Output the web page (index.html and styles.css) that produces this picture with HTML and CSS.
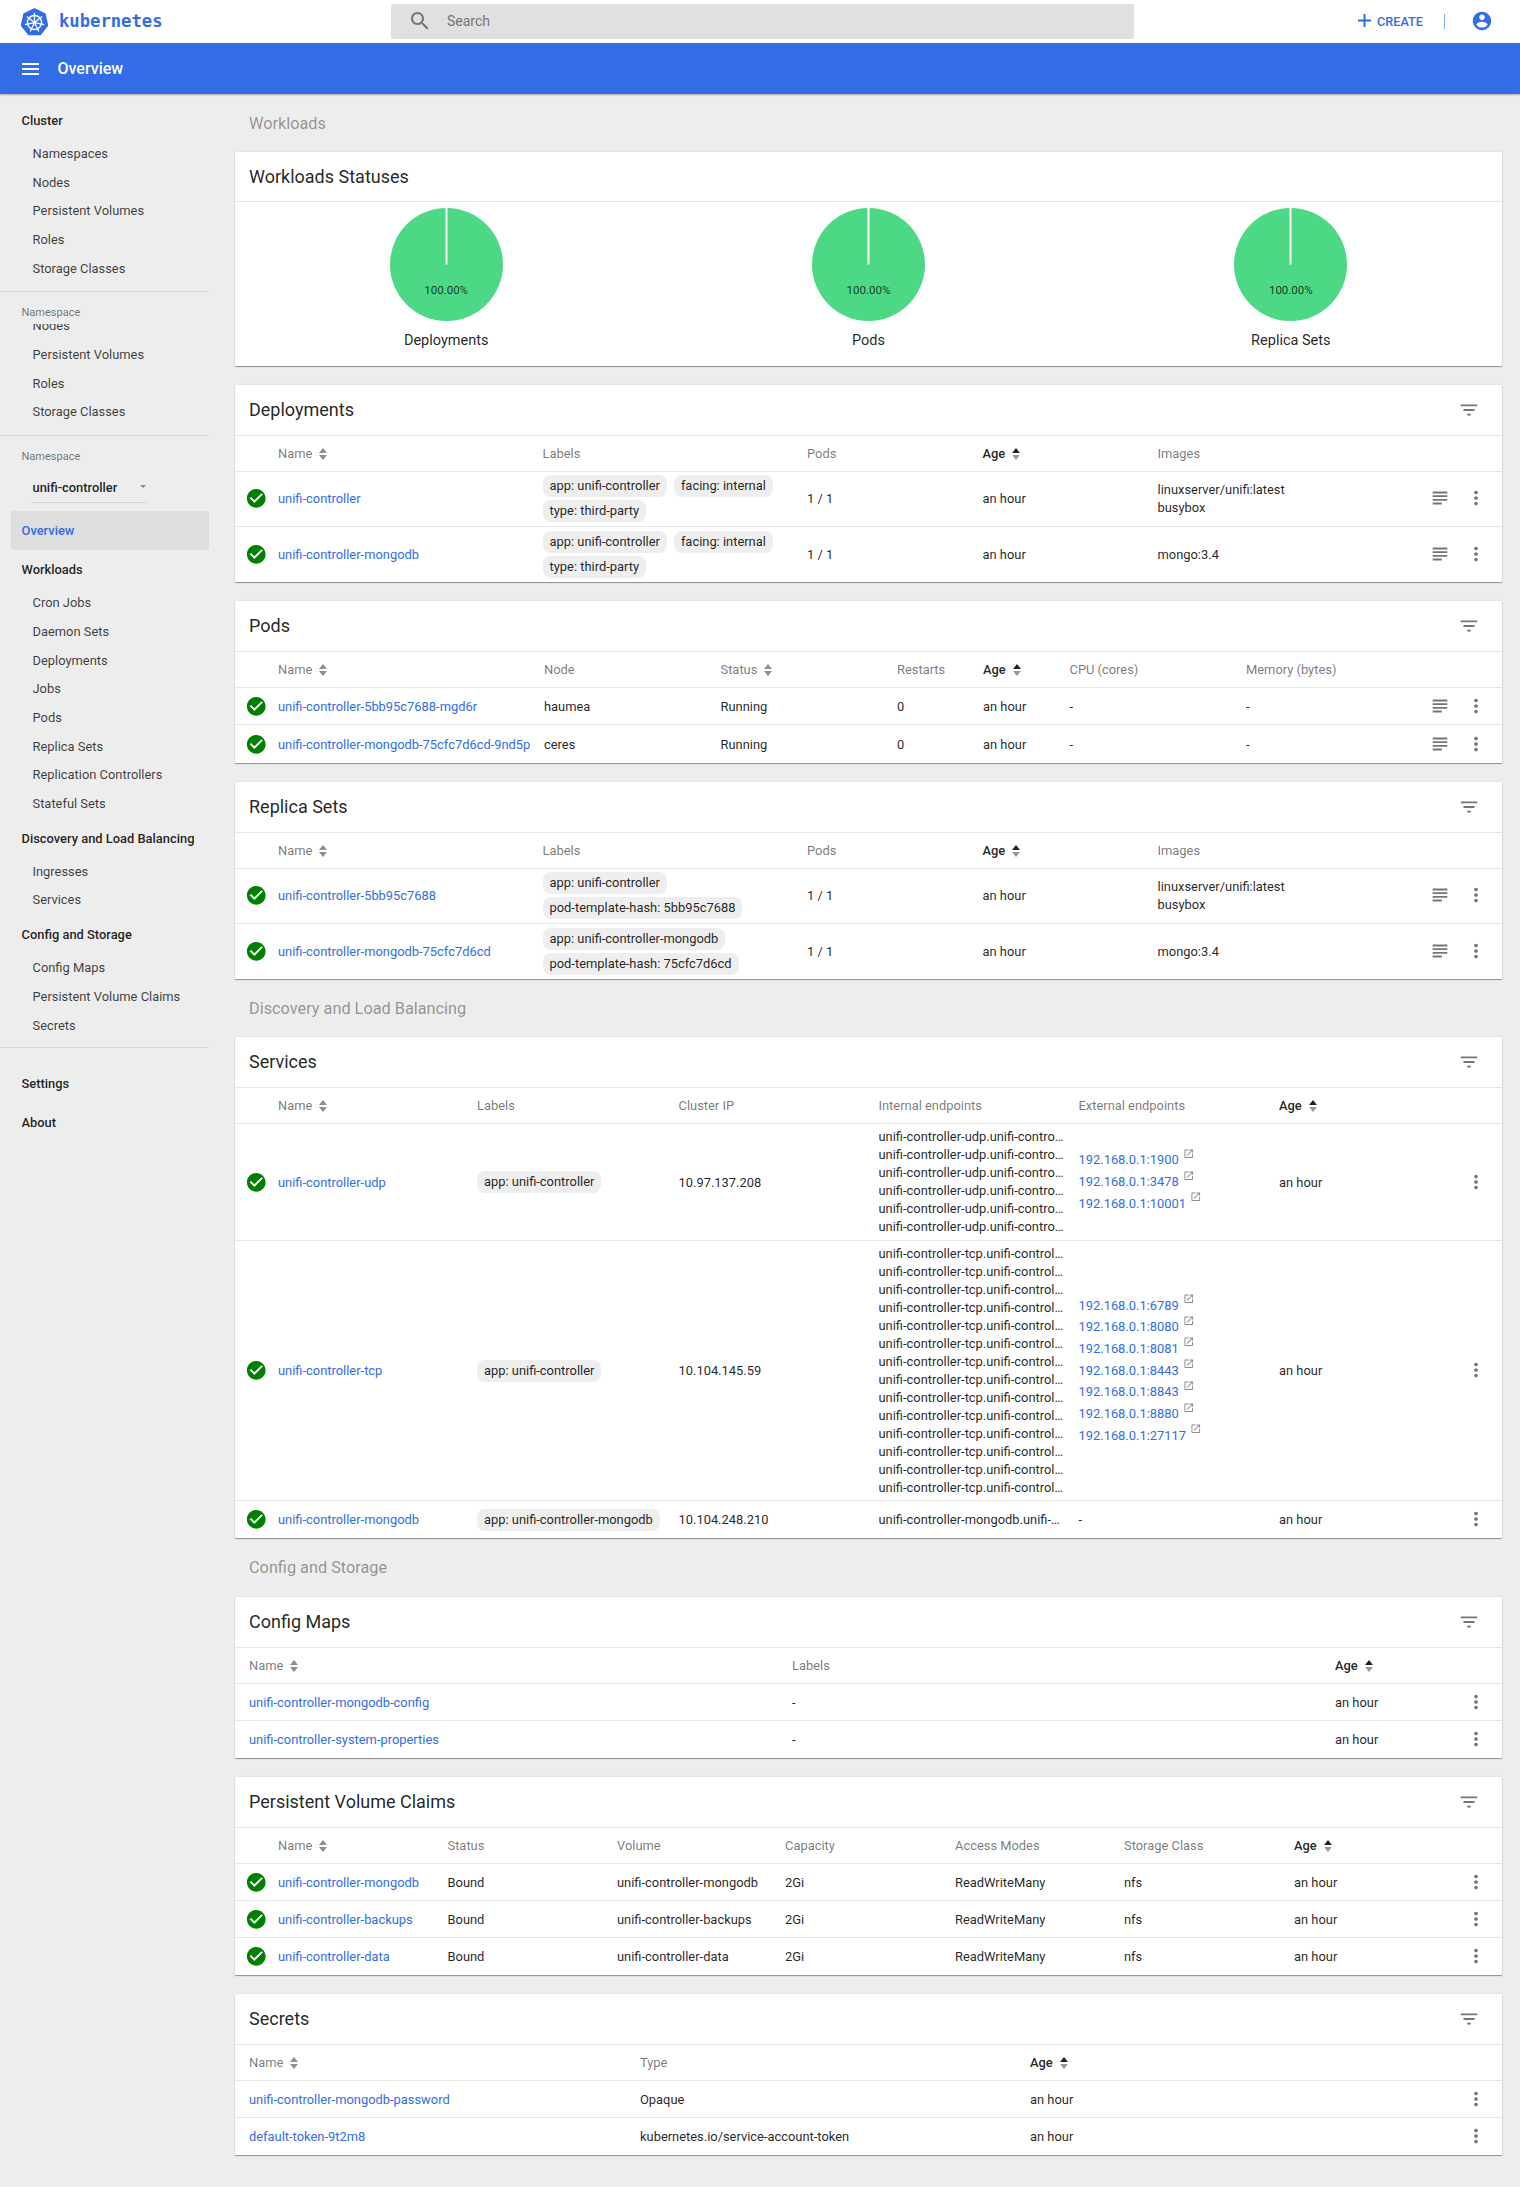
FILE: index.html
```html
<!DOCTYPE html>
<html lang="en">
<head>
<meta charset="utf-8">
<title>Overview - Kubernetes Dashboard</title>
<link rel="stylesheet" href="styles.css">
</head>
<body>
<svg class="sprite" aria-hidden="true">
  <symbol id="sort" viewBox="0 0 8 12"><path d="M4 0l4 5H0z" fill="#8f8f8f"/><path d="M0 7h8l-4 5z" fill="#8f8f8f"/></symbol>
  <symbol id="sort-up" viewBox="0 0 8 12"><path d="M4 0l4 5H0z" fill="#222"/><path d="M0 7h8l-4 5z" fill="#999"/></symbol>
  <symbol id="ok" viewBox="0 0 24 24"><circle cx="12" cy="12" r="8" fill="#fff"/><path fill="#008000" d="M12 2C6.48 2 2 6.48 2 12s4.48 10 10 10 10-4.48 10-10S17.52 2 12 2zm-2 15l-5-5 1.41-1.41L10 14.17l7.59-7.59L19 8l-9 9z"/></symbol>
  <symbol id="more" viewBox="0 0 24 24"><path d="M12 8c1.1 0 2-.9 2-2s-.9-2-2-2-2 .9-2 2 .9 2 2 2zm0 2c-1.1 0-2 .9-2 2s.9 2 2 2 2-.9 2-2-.9-2-2-2zm0 6c-1.1 0-2 .9-2 2s.9 2 2 2 2-.9 2-2-.9-2-2-2z"/></symbol>
  <symbol id="logs" viewBox="0 0 24 24"><path d="M14 17H4v2h10v-2zm6-8H4v2h16V9zM4 15h16v-2H4v2zM4 5v2h16V5H4z"/></symbol>
  <symbol id="filter" viewBox="0 0 24 24"><path d="M10 18h4v-2h-4v2zM3 6v2h18V6H3zm3 7h12v-2H6v2z"/></symbol>
  <symbol id="open" viewBox="0 0 24 24"><path d="M19 19H5V5h7V3H5c-1.11 0-2 .9-2 2v14c0 1.1.89 2 2 2h14c1.1 0 2-.9 2-2v-7h-2v7zM14 3v2h3.59l-9.83 9.83 1.41 1.41L19 6.41V10h2V3h-7z"/></symbol>
  <symbol id="pie" viewBox="0 0 113 113"><circle cx="56.5" cy="56.5" r="56.5" fill="#4dd886"/><rect x="55.5" y="0" width="2" height="56.5" fill="#fff"/></symbol>
</svg>

<header class="topbar">
  <div class="brand">
    <svg class="logo" viewBox="0 0 26 27">
      <path d="M13 1l10 4.8 2.5 10.9-7 8.9H7.500l-7-8.900L3 5.800z" fill="#326de6" stroke="#326de6" stroke-width="1.500" stroke-linejoin="round"/>
      <g stroke="#fff" fill="none">
        <circle cx="13" cy="14" r="6.800" stroke-width="1.400"/>
        <circle cx="13" cy="14" r="1.500" fill="#fff" stroke="none"/>
        <path stroke-width="1.200" d="M13 14V4.500M13 14l7.400-5.900M13 14l9.300 2.100M13 14l4.100 8.600M13 14l-4.100 8.600M13 14l-9.300 2.100M13 14L5.600 8.100"/>
      </g>
    </svg>
    <span class="wordmark">kubernetes</span>
  </div>
  <div class="search">
    <svg class="search-icon" viewBox="0 0 24 24"><path d="M15.500 14h-.79l-.28-.27C15.410 12.590 16 11.110 16 9.500 16 5.910 13.090 3 9.500 3S3 5.910 3 9.500 5.910 16 9.500 16c1.610 0 3.090-.59 4.230-1.570l.27.28v.79l5 4.990L20.490 19l-4.990-5zm-6 0C7.010 14 5 11.990 5 9.500S7.010 5 9.500 5 14 7.010 14 9.500 11.990 14 9.500 14z"/></svg>
    <span>Search</span>
  </div>
  <div class="top-actions">
    <svg class="plus" viewBox="0 0 13 13"><path d="M5.500 0h2v5.500H13v2H7.500V13h-2V7.500H0v-2h5.500z"/></svg>
    <span class="create">CREATE</span>
    <span class="vsep"></span>
    <svg class="account" viewBox="0 0 24 24"><path d="M12 2C6.480 2 2 6.480 2 12s4.480 10 10 10 10-4.480 10-10S17.520 2 12 2zm0 3c1.660 0 3 1.340 3 3s-1.340 3-3 3-3-1.340-3-3 1.340-3 3-3zm0 14.200c-2.500 0-4.710-1.280-6-3.220.03-1.990 4-3.080 6-3.080 1.990 0 5.970 1.090 6 3.080-1.290 1.940-3.500 3.220-6 3.220z"/></svg>
  </div>
</header>

<div class="toolbar">
  <svg class="burger" viewBox="0 0 17 12"><path d="M0 0h17v2H0zM0 5h17v2H0zM0 10h17v2H0z"/></svg>
  <span class="toolbar-title">Overview</span>
</div>

<div class="shell">
  <nav class="side">
    <div class="side-top">
      <a class="sh">Cluster</a>
      <a class="si">Namespaces</a>
      <a class="si">Nodes</a>
      <a class="si">Persistent Volumes</a>
      <a class="si">Roles</a>
      <a class="si">Storage Classes</a>
      <div class="sdiv d1"></div>
      <div class="slabel">Namespace</div>
      <div class="clipped"><a class="si">Nodes</a></div>
      <a class="si">Persistent Volumes</a>
      <a class="si">Roles</a>
      <a class="si">Storage Classes</a>
      <div class="sdiv d2"></div>
      <div class="slabel">Namespace</div>
      <div class="nsselect"><span>unifi-controller</span><i class="caret"></i></div>
      <a class="sactive">Overview</a>
      <a class="sh">Workloads</a>
      <a class="si">Cron Jobs</a>
      <a class="si">Daemon Sets</a>
      <a class="si">Deployments</a>
      <a class="si">Jobs</a>
      <a class="si">Pods</a>
      <a class="si">Replica Sets</a>
      <a class="si">Replication Controllers</a>
      <a class="si">Stateful Sets</a>
      <a class="sh gap">Discovery and Load Balancing</a>
      <a class="si">Ingresses</a>
      <a class="si">Services</a>
      <a class="sh gap">Config and Storage</a>
      <a class="si">Config Maps</a>
      <a class="si">Persistent Volume Claims</a>
      <a class="si">Secrets</a>
      <div class="sdiv d3"></div>
      <a class="sh tall">Settings</a>
      <a class="sh tall">About</a>
    </div>
  </nav>

  <main class="content">
    <h2 class="section">Workloads</h2>

    <section class="card">
      <div class="card-head short"><h3>Workloads Statuses</h3></div>
      <div class="pies">
        <figure class="pie"><div class="pie-disc"><svg><use href="#pie"/></svg><span>100.00%</span></div><figcaption>Deployments</figcaption></figure>
        <figure class="pie"><div class="pie-disc"><svg><use href="#pie"/></svg><span>100.00%</span></div><figcaption>Pods</figcaption></figure>
        <figure class="pie"><div class="pie-disc"><svg><use href="#pie"/></svg><span>100.00%</span></div><figcaption>Replica Sets</figcaption></figure>
      </div>
    </section>

    <section class="card">
      <div class="card-head"><h3>Deployments</h3><svg class="filter"><use href="#filter"/></svg></div>
      <div class="row head c-deploy"><span></span><span>Name<svg class="srt"><use href="#sort"/></svg></span><span>Labels</span><span>Pods</span><span class="age">Age<svg class="srt"><use href="#sort-up"/></svg></span><span>Images</span></div>
      <div class="row tall55 c-deploy"><svg class="ok"><use href="#ok"/></svg><a class="lnk">unifi-controller</a><div class="pills"><span class="pill">app: unifi-controller</span><span class="pill">facing: internal</span><span class="pill">type: third-party</span></div><span>1 / 1</span><span>an hour</span><div class="lines"><div>linuxserver/unifi:latest</div><div>busybox</div></div><div class="acts"><svg class="logs"><use href="#logs"/></svg><svg class="more"><use href="#more"/></svg></div></div>
      <div class="row tall55 c-deploy"><svg class="ok"><use href="#ok"/></svg><a class="lnk">unifi-controller-mongodb</a><div class="pills"><span class="pill">app: unifi-controller</span><span class="pill">facing: internal</span><span class="pill">type: third-party</span></div><span>1 / 1</span><span>an hour</span><span>mongo:3.4</span><div class="acts"><svg class="logs"><use href="#logs"/></svg><svg class="more"><use href="#more"/></svg></div></div>
    </section>

    <section class="card">
      <div class="card-head"><h3>Pods</h3><svg class="filter"><use href="#filter"/></svg></div>
      <div class="row head c-pods"><span></span><span>Name<svg class="srt"><use href="#sort"/></svg></span><span>Node</span><span>Status<svg class="srt"><use href="#sort"/></svg></span><span>Restarts</span><span class="age">Age<svg class="srt"><use href="#sort-up"/></svg></span><span>CPU (cores)</span><span>Memory (bytes)</span></div>
      <div class="row c-pods"><svg class="ok"><use href="#ok"/></svg><a class="lnk">unifi-controller-5bb95c7688-mgd6r</a><span>haumea</span><span>Running</span><span>0</span><span>an hour</span><span>-</span><span>-</span><div class="acts"><svg class="logs"><use href="#logs"/></svg><svg class="more"><use href="#more"/></svg></div></div>
      <div class="row c-pods"><svg class="ok"><use href="#ok"/></svg><a class="lnk">unifi-controller-mongodb-75cfc7d6cd-9nd5p</a><span>ceres</span><span>Running</span><span>0</span><span>an hour</span><span>-</span><span>-</span><div class="acts"><svg class="logs"><use href="#logs"/></svg><svg class="more"><use href="#more"/></svg></div></div>
    </section>

    <section class="card">
      <div class="card-head"><h3>Replica Sets</h3><svg class="filter"><use href="#filter"/></svg></div>
      <div class="row head c-deploy"><span></span><span>Name<svg class="srt"><use href="#sort"/></svg></span><span>Labels</span><span>Pods</span><span class="age">Age<svg class="srt"><use href="#sort-up"/></svg></span><span>Images</span></div>
      <div class="row tall55 c-deploy"><svg class="ok"><use href="#ok"/></svg><a class="lnk">unifi-controller-5bb95c7688</a><div class="pills"><span class="pill">app: unifi-controller</span><span class="pill">pod-template-hash: 5bb95c7688</span></div><span>1 / 1</span><span>an hour</span><div class="lines"><div>linuxserver/unifi:latest</div><div>busybox</div></div><div class="acts"><svg class="logs"><use href="#logs"/></svg><svg class="more"><use href="#more"/></svg></div></div>
      <div class="row tall55 c-deploy"><svg class="ok"><use href="#ok"/></svg><a class="lnk">unifi-controller-mongodb-75cfc7d6cd</a><div class="pills"><span class="pill">app: unifi-controller-mongodb</span><span class="pill">pod-template-hash: 75cfc7d6cd</span></div><span>1 / 1</span><span>an hour</span><span>mongo:3.4</span><div class="acts"><svg class="logs"><use href="#logs"/></svg><svg class="more"><use href="#more"/></svg></div></div>
    </section>

    <h2 class="section">Discovery and Load Balancing</h2>

    <section class="card">
      <div class="card-head"><h3>Services</h3><svg class="filter"><use href="#filter"/></svg></div>
      <div class="row head c-svc"><span></span><span>Name<svg class="srt"><use href="#sort"/></svg></span><span>Labels</span><span>Cluster IP</span><span>Internal endpoints</span><span>External endpoints</span><span class="age">Age<svg class="srt"><use href="#sort-up"/></svg></span></div>
      <div class="row loose c-svc"><svg class="ok"><use href="#ok"/></svg><a class="lnk">unifi-controller-udp</a><div class="pills"><span class="pill">app: unifi-controller</span></div><span>10.97.137.208</span>
        <div class="endpoints">
          <div>unifi-controller-udp.unifi-controller:1900 UDP</div><div>unifi-controller-udp.unifi-controller:1900 UDP</div><div>unifi-controller-udp.unifi-controller:3478 UDP</div><div>unifi-controller-udp.unifi-controller:3478 UDP</div><div>unifi-controller-udp.unifi-controller:10001 UDP</div><div>unifi-controller-udp.unifi-controller:10001 UDP</div>
        </div>
        <div class="ext">
          <div><a class="lnk">192.168.0.1:1900</a><svg class="open"><use href="#open"/></svg></div>
          <div><a class="lnk">192.168.0.1:3478</a><svg class="open"><use href="#open"/></svg></div>
          <div><a class="lnk">192.168.0.1:10001</a><svg class="open"><use href="#open"/></svg></div>
        </div>
        <span>an hour</span><div class="acts"><svg class="more"><use href="#more"/></svg></div></div>
      <div class="row loose c-svc"><svg class="ok"><use href="#ok"/></svg><a class="lnk">unifi-controller-tcp</a><div class="pills"><span class="pill">app: unifi-controller</span></div><span>10.104.145.59</span>
        <div class="endpoints">
          <div>unifi-controller-tcp.unifi-controller:6789 TCP</div><div>unifi-controller-tcp.unifi-controller:6789 TCP</div><div>unifi-controller-tcp.unifi-controller:8080 TCP</div><div>unifi-controller-tcp.unifi-controller:8080 TCP</div><div>unifi-controller-tcp.unifi-controller:8081 TCP</div><div>unifi-controller-tcp.unifi-controller:8081 TCP</div><div>unifi-controller-tcp.unifi-controller:8443 TCP</div><div>unifi-controller-tcp.unifi-controller:8443 TCP</div><div>unifi-controller-tcp.unifi-controller:8843 TCP</div><div>unifi-controller-tcp.unifi-controller:8843 TCP</div><div>unifi-controller-tcp.unifi-controller:8880 TCP</div><div>unifi-controller-tcp.unifi-controller:8880 TCP</div><div>unifi-controller-tcp.unifi-controller:27117 TCP</div><div>unifi-controller-tcp.unifi-controller:27117 TCP</div>
        </div>
        <div class="ext">
          <div><a class="lnk">192.168.0.1:6789</a><svg class="open"><use href="#open"/></svg></div>
          <div><a class="lnk">192.168.0.1:8080</a><svg class="open"><use href="#open"/></svg></div>
          <div><a class="lnk">192.168.0.1:8081</a><svg class="open"><use href="#open"/></svg></div>
          <div><a class="lnk">192.168.0.1:8443</a><svg class="open"><use href="#open"/></svg></div>
          <div><a class="lnk">192.168.0.1:8843</a><svg class="open"><use href="#open"/></svg></div>
          <div><a class="lnk">192.168.0.1:8880</a><svg class="open"><use href="#open"/></svg></div>
          <div><a class="lnk">192.168.0.1:27117</a><svg class="open"><use href="#open"/></svg></div>
        </div>
        <span>an hour</span><div class="acts"><svg class="more"><use href="#more"/></svg></div></div>
      <div class="row c-svc"><svg class="ok"><use href="#ok"/></svg><a class="lnk">unifi-controller-mongodb</a><div class="pills"><span class="pill">app: unifi-controller-mongodb</span></div><span>10.104.248.210</span><div class="endpoints"><div>unifi-controller-mongodb.unifi-controller:27017 TCP</div></div><span>-</span><span>an hour</span><div class="acts"><svg class="more"><use href="#more"/></svg></div></div>
    </section>

    <h2 class="section wide">Config and Storage</h2>

    <section class="card">
      <div class="card-head"><h3>Config Maps</h3><svg class="filter"><use href="#filter"/></svg></div>
      <div class="row head c-cm"><span>Name<svg class="srt"><use href="#sort"/></svg></span><span>Labels</span><span class="age">Age<svg class="srt"><use href="#sort-up"/></svg></span></div>
      <div class="row c-cm"><a class="lnk">unifi-controller-mongodb-config</a><span>-</span><span>an hour</span><div class="acts"><svg class="more"><use href="#more"/></svg></div></div>
      <div class="row c-cm"><a class="lnk">unifi-controller-system-properties</a><span>-</span><span>an hour</span><div class="acts"><svg class="more"><use href="#more"/></svg></div></div>
    </section>

    <section class="card">
      <div class="card-head"><h3>Persistent Volume Claims</h3><svg class="filter"><use href="#filter"/></svg></div>
      <div class="row head c-pvc"><span></span><span>Name<svg class="srt"><use href="#sort"/></svg></span><span>Status</span><span>Volume</span><span>Capacity</span><span>Access Modes</span><span>Storage Class</span><span class="age">Age<svg class="srt"><use href="#sort-up"/></svg></span></div>
      <div class="row c-pvc"><svg class="ok"><use href="#ok"/></svg><a class="lnk">unifi-controller-mongodb</a><span>Bound</span><span>unifi-controller-mongodb</span><span>2Gi</span><span>ReadWriteMany</span><span>nfs</span><span>an hour</span><div class="acts"><svg class="more"><use href="#more"/></svg></div></div>
      <div class="row c-pvc"><svg class="ok"><use href="#ok"/></svg><a class="lnk">unifi-controller-backups</a><span>Bound</span><span>unifi-controller-backups</span><span>2Gi</span><span>ReadWriteMany</span><span>nfs</span><span>an hour</span><div class="acts"><svg class="more"><use href="#more"/></svg></div></div>
      <div class="row c-pvc"><svg class="ok"><use href="#ok"/></svg><a class="lnk">unifi-controller-data</a><span>Bound</span><span>unifi-controller-data</span><span>2Gi</span><span>ReadWriteMany</span><span>nfs</span><span>an hour</span><div class="acts"><svg class="more"><use href="#more"/></svg></div></div>
    </section>

    <section class="card">
      <div class="card-head"><h3>Secrets</h3><svg class="filter"><use href="#filter"/></svg></div>
      <div class="row head c-sec"><span>Name<svg class="srt"><use href="#sort"/></svg></span><span>Type</span><span class="age">Age<svg class="srt"><use href="#sort-up"/></svg></span></div>
      <div class="row c-sec"><a class="lnk">unifi-controller-mongodb-password</a><span>Opaque</span><span>an hour</span><div class="acts"><svg class="more"><use href="#more"/></svg></div></div>
      <div class="row c-sec"><a class="lnk">default-token-9t2m8</a><span>kubernetes.io/service-account-token</span><span>an hour</span><div class="acts"><svg class="more"><use href="#more"/></svg></div></div>
    </section>
  </main>
</div>
</body>
</html>
```

FILE: styles.css
```css
* { box-sizing: border-box; }
html, body { margin: 0; padding: 0; }
body {
  background: #ededed;
  font-family: Roboto, "Liberation Sans", sans-serif;
  font-size: 12.9px;
  color: rgba(0, 0, 0, .87);
}
.sprite { display: none; }
a { color: inherit; text-decoration: none; }

/* top bar */
.topbar { height: 43px; background: #fff; display: flex; align-items: center; }
.brand { width: 391px; padding-left: 21px; display: flex; align-items: center; height: 100%; }
.logo { width: 27px; height: 28px; display: block; margin-top: 1px; }
.wordmark {
  margin-left: 11px;
  font-family: "DejaVu Sans Mono", monospace;
  font-size: 17.2px;
  font-weight: 700;
  color: #326de6;
  line-height: 1;
}
.search {
  width: 743px;
  height: 35px;
  margin-top: -1px;
  background: #e0e0e0;
  border-radius: 2px;
  display: flex;
  align-items: center;
  color: #757575;
  font-size: 14px;
}
.search-icon { width: 24px; height: 24px; margin-left: 17px; margin-right: 15px; fill: #757575; }
.top-actions { display: flex; align-items: center; margin-left: 224px; }
.plus { width: 13px; height: 13px; fill: #326de6; display: block; margin-top: -2px; }
.create { margin-left: 6px; font-size: 12.7px; font-weight: 500; color: #326de6; width: 46px; }
.vsep { width: 1px; height: 15px; background: rgba(50, 109, 230, .6); margin-left: 21px; }
.account { width: 22px; height: 22px; fill: #326de6; margin-left: 26px; margin-top: -1px; }

/* toolbar */
.toolbar {
  height: 51px;
  background: #326de6;
  color: #fff;
  display: flex;
  align-items: center;
  box-shadow: 0 1px 2px rgba(0, 0, 0, .3);
  position: relative;
}
.burger { width: 17px; height: 12px; margin-left: 22px; fill: #fff; }
.toolbar-title { margin-left: 18.5px; font-size: 16px; font-weight: 500; }

/* shell */
.shell { display: flex; align-items: flex-start; }
.side { width: 209px; flex: none; padding-top: 8px; color: rgba(0, 0, 0, .75); }
.side-top { display: flex; flex-direction: column; }
.sh {
  height: 38px;
  line-height: 38px;
  padding-left: 21.5px;
  font-weight: 500;
  color: rgba(0, 0, 0, .87);
}
.sh.gap { margin-top: 1px; }
.sh.tall { height: 39px; line-height: 39px; }
.si { height: 28.7px; line-height: 28.7px; padding-left: 32.5px; display: block; }
.sdiv { height: 1px; background: #d4d4d4; }
.d1 { margin-top: 7.5px; }
.d2 { margin-top: 8.3px; }
.d3 { margin: 7px 0 16px; }
.slabel { height: 14px; margin-top: 14px; line-height: 14px; padding-left: 21.5px; font-size: 11px; color: rgba(0, 0, 0, .54); }
.clipped { height: 17px; margin-top: 4px; overflow: hidden; }
.clipped .si { margin-top: -11.8px; }
.nsselect {
  margin: 9px 62px 0 31px;
  height: 30px;
  border-bottom: 1px solid #d4d4d4;
  display: flex;
  align-items: center;
  padding: 0 0 0 1.5px;
  font-weight: 500;
  color: rgba(0, 0, 0, .87);
  position: relative;
}
.caret {
  position: absolute;
  right: 1.5px;
  top: 12px;
  border-left: 3.5px solid transparent;
  border-right: 3.5px solid transparent;
  border-top: 3.5px solid #8a8a8a;
}
.sactive {
  margin: 8px 0 1px 11px;
  height: 39px;
  line-height: 39px;
  padding-left: 10.5px;
  background: #dedede;
  border-radius: 2px;
  color: #326de6;
  font-weight: 500;
}

/* content */
.content { flex: 1; min-width: 0; padding: 19px 18px 13px 26px; }
.section {
  margin: 0 0 18px 14px;
  padding-top: 1px;
  height: 21px;
  line-height: 20px;
  font-size: 16.3px;
  font-weight: 400;
  color: rgba(0, 0, 0, .4);
}
.section.wide { margin-bottom: 19px; }
.card {
  background: #fff;
  border-radius: 1px;
  box-shadow: 0 1px 1px rgba(0, 0, 0, .38), 0 0 2px rgba(0, 0, 0, .14);
  margin-bottom: 19px;
}
.card-head {
  height: 51px;
  border-bottom: 1px solid #e6e6e6;
  display: flex;
  align-items: center;
  justify-content: space-between;
  padding: 0 22px 1px 14px;
}
.card-head.short { height: 50px; padding-bottom: 0; }
.card-head h3 { margin: 0; font-size: 18px; font-weight: 400; color: rgba(0, 0, 0, .87); }
.filter { width: 22px; height: 22px; fill: #757575; display: block; }

/* pies */
.pies { display: grid; grid-template-columns: repeat(3, 1fr); height: 164px; padding-top: 6px; }
.pie { margin: 0; display: flex; flex-direction: column; align-items: center; }
.pie-disc { width: 113px; height: 113px; position: relative; }
.pie-disc svg { width: 113px; height: 113px; display: block; }
.pie-disc span {
  position: absolute;
  left: 0;
  right: 0;
  top: 75px;
  text-align: center;
  font-size: 11.5px;
  line-height: 14px;
  color: rgba(0, 0, 0, .75);
}
.pie figcaption { margin-top: 10.5px; font-size: 14.5px; line-height: 18px; }

/* tables */
.row {
  display: grid;
  align-items: center;
  min-height: 37px;
  border-bottom: 1px solid #e6e6e6;
}
.row.head { min-height: 36px; color: rgba(0, 0, 0, .54); }
.card > .row:last-child { border-bottom: 0; }
.card > .c-pods:last-child { min-height: 38px; }
.row > * { min-width: 0; }
.row.tall55 { min-height: 55px; padding-bottom: 1px; }
.row.loose { padding: 4px 0 3.5px; }
.row.head > span { display: flex; align-items: center; white-space: nowrap; }
.row.head > .age { color: rgba(0, 0, 0, .87); font-weight: 500; }
.srt { width: 8px; height: 12px; margin-left: 7px; flex: none; }
.lnk { color: #326de6; }
.ok { width: 22.5px; height: 22.5px; justify-self: center; display: block; }
.c-deploy { grid-template-columns: 43px 264.5px 264.5px 175.5px 175px 264.5px 1fr; }
.c-pods { grid-template-columns: 43px 266px 176.5px 176.5px 86px 86.5px 176.5px 176px 1fr; }
.c-svc { grid-template-columns: 43px 199px 201.5px 200px 200px 200.5px 1fr 80px; }
.c-cm { grid-template-columns: 543px 543px 87px 1fr; padding-left: 14px; }
.c-pvc { grid-template-columns: 43px 169.5px 169.5px 168px 170px 169px 170px 1fr 80px; }
.c-sec { grid-template-columns: 391px 390px 357px 1fr; padding-left: 14px; }
.acts { display: flex; justify-content: flex-end; padding-right: 8px; grid-column: -2 / -1; margin-top: -1px; }
.logs { width: 22px; height: 22px; fill: #757575; margin: 0 7px; display: block; }
.more { width: 22px; height: 22px; fill: #757575; margin: 0 7px; display: block; }
.pills { display: flex; flex-wrap: wrap; gap: 3px 7px; padding-right: 20px; }
.pill { background: #eee; border-radius: 8px; height: 22px; line-height: 21px; padding: 0 7px; white-space: nowrap; }
.lines { line-height: 18px; margin-top: 1px; }
.endpoints { padding-right: 14px; line-height: 18px; }
.endpoints div { white-space: nowrap; overflow: hidden; text-overflow: ellipsis; }
.ext { line-height: 21.7px; }
.ext div { white-space: nowrap; }
.open { width: 11.5px; height: 11.5px; fill: #8a8a8a; margin-left: 4px; position: relative; top: -5px; vertical-align: baseline; }
```
